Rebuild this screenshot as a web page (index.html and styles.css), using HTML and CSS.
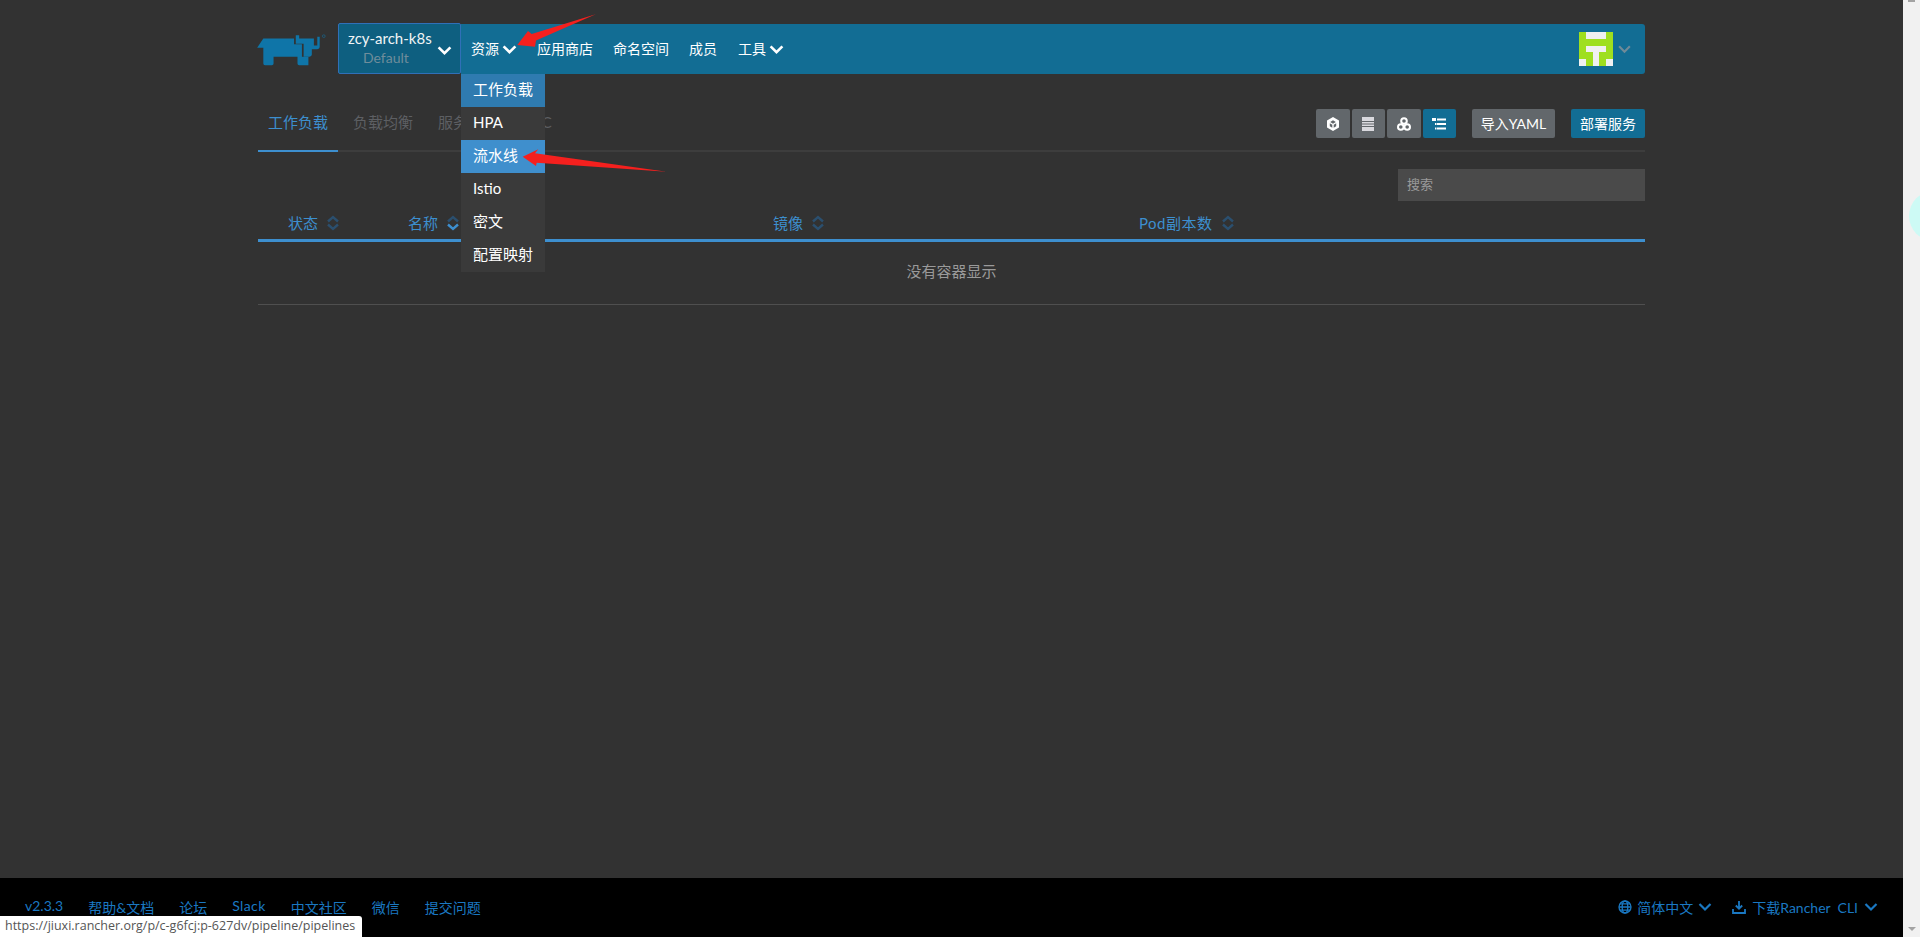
FILE: index.html
```html
<!DOCTYPE html>
<html lang="zh">
<head>
<meta charset="utf-8">
<title>Rancher</title>
<link rel="stylesheet" href="styles.css">
</head>
<body>
<div class="page">
  <main class="main">
    <div class="content">
      <header class="top">
        <div class="logo">
          <svg class="logo-svg" viewBox="0 0 225 120"><path d="M30 25H120V42H143V78H162V103H135Q130 103 130 98V78H60V98Q60 103 55 103H35Q30 103 30 98V52H12Z"/><path d="M125 15H135V25H178V45H188V20H195V50Q195 56 188 56H172V72Q172 78 165 78H148V40H125Z"/><circle class="logo-reg" cx="207" cy="18" r="4"/></svg>
        </div>
        <div class="cluster">
          <div class="cluster-text">
            <div class="cluster-name">zcy-arch-k8s</div>
            <div class="cluster-sub">Default</div>
          </div>
          <svg class="chev chev-cluster" viewBox="0 0 14 10"><path d="M1.500 2l5.500 5.500L12.500 2"/></svg>
        </div>
        <nav class="nav">
          <a class="nav-item">资源<svg class="chev" viewBox="0 0 14 10"><path d="M1.500 2l5.500 5.500L12.500 2"/></svg></a>
          <a class="nav-item">应用商店</a>
          <a class="nav-item">命名空间</a>
          <a class="nav-item nav-members">成员</a>
          <a class="nav-item">工具<svg class="chev" viewBox="0 0 14 10"><path d="M1.500 2l5.500 5.500L12.500 2"/></svg></a>
          <div class="avatar-wrap">
            <svg class="avatar" viewBox="0 0 5 5" shape-rendering="crispEdges">
              <rect width="5" height="5" fill="#9fdf1f"/>
              <g fill="#f0f0f0"><rect x="1" y="0" width="3" height="1"/><rect x="1" y="2" width="3" height="1"/><rect x="2" y="3" width="1" height="2"/><rect x="0" y="4" width="1" height="1"/><rect x="4" y="4" width="1" height="1"/></g>
            </svg>
            <svg class="chev chev-user" viewBox="0 0 14 10"><path d="M2 2l5 5 5-5"/></svg>
          </div>
          <ul class="menu">
            <li class="menu-item menu-current">工作负载</li>
            <li class="menu-item">HPA</li>
            <li class="menu-item menu-hover">流水线</li>
            <li class="menu-item">Istio</li>
            <li class="menu-item">密文</li>
            <li class="menu-item">配置映射</li>
          </ul>
        </nav>
      </header>

      <section class="tabbar">
        <div class="tabs">
          <a class="tab tab-active">工作负载</a>
          <a class="tab">负载均衡</a>
          <a class="tab">服务发现</a>
          <a class="tab">PVC</a>
        </div>
        <div class="actions">
          <div class="icon-group">
            <button class="icon-btn"><svg viewBox="0 0 16 16"><path class="ico-w" d="M8 1L14 4.500V11.500L8 15 2 11.500V4.500Z"/><path class="ico-d" d="M5.200 6L8 7.700 10.800 6 8 4.300ZM4.800 7.300L7.300 8.800V11.800L4.800 10.300ZM11.200 7.300L8.700 8.800V11.800L11.200 10.300Z"/></svg></button>
            <button class="icon-btn"><svg viewBox="0 0 16 16"><path class="ico-f" d="M2 1h12v14H2z"/><path class="ico-l" d="M2 5.500h12M2 8h12M2 10.500h12"/></svg></button>
            <button class="icon-btn"><svg viewBox="0 0 16 16"><g class="ico-s"><circle cx="8" cy="5" r="2.800"/><circle cx="4.800" cy="11" r="2.800"/><circle cx="11.200" cy="11" r="2.800"/></g></svg></button>
            <button class="icon-btn icon-btn-on"><svg viewBox="0 0 16 16"><path class="ico-w" d="M1 2h4v3H1zM6 2.500h9v2H6zM6 7h9v2H6zM6 11.500h9v2H6zM4 7h1.500v2H4zM4 11.500h1.500v2H4z"/></svg></button>
          </div>
          <button class="btn btn-grey">导入YAML</button>
          <button class="btn btn-primary">部署服务</button>
        </div>
      </section>

      <div class="search-row"><div class="search">搜索</div></div>

      <div class="table-head">
        <div class="th th-state">状态<svg class="sort" viewBox="0 0 14 18"><path d="M2 7.500L7 3l5 4.500M2 10.500l5 4.500 5-4.500"/></svg></div>
        <div class="th">名称<svg class="sort" viewBox="0 0 14 18"><path d="M2 7.500L7 3l5 4.500"/><path class="sort-on" d="M2 10.500l5 4.500 5-4.500"/></svg></div>
        <div class="th">镜像<svg class="sort" viewBox="0 0 14 18"><path d="M2 7.500L7 3l5 4.500M2 10.500l5 4.500 5-4.500"/></svg></div>
        <div class="th th-pods">Pod副本数<svg class="sort" viewBox="0 0 14 18"><path d="M2 7.500L7 3l5 4.500M2 10.500l5 4.500 5-4.500"/></svg></div>
      </div>
      <div class="empty">没有容器显示</div>
    </div>

    <footer class="footer">
      <div class="foot-links">
        <a>v2.3.3</a><a>帮助&amp;文档</a><a>论坛</a><a class="foot-slack">Slack</a><a>中文社区</a><a>微信</a><a>提交问题</a>
      </div>
      <div class="foot-right">
        <a class="foot-drop foot-lang">
          <svg class="foot-ico" viewBox="0 0 14 14"><g class="foot-s"><circle cx="7" cy="7" r="6"/><ellipse cx="7" cy="7" rx="2.800" ry="6"/><path d="M1 7h12M2 3.800h10M2 10.200h10"/></g></svg>
          简体中文
          <svg class="foot-chev" viewBox="0 0 14 10"><path d="M1.500 2l5.500 5.500L12.500 2"/></svg>
        </a>
        <a class="foot-drop">
          <svg class="foot-ico" viewBox="0 0 14 14"><path class="foot-w" d="M7 1v7.500M3.800 5.500L7 8.700l3.200-3.200M1 9v4h12V9"/></svg>
          下载Rancher&nbsp;&nbsp;CLI
          <svg class="foot-chev" viewBox="0 0 14 10"><path d="M1.500 2l5.500 5.500L12.500 2"/></svg>
        </a>
      </div>
    </footer>
    <div class="status-tip">https://jiuxi.rancher.org/p/c-g6fcj:p-627dv/pipeline/pipelines</div>
  </main>
  <aside class="scrollbar">
    <span class="sb-up"></span>
    <span class="sb-down"></span>
    <span class="bubble"></span>
  </aside>
</div>
<svg class="arrows" viewBox="0 0 1920 937">
  <path d="M595.700 14.300L531.700 34 528 31 517.300 45 535 46.700 536 40.500Z"/>
  <path d="M522.700 156.700L538.300 149.300 535 153.300 666.700 171.700 536.700 162.700 536 166Z"/>
</svg>
</body>
</html>
```

FILE: styles.css
```css
* { box-sizing: border-box; }
html, body { margin: 0; height: 100%; overflow: hidden; }
body {
  background: #323232;
  font-family: Lato, "Noto Sans CJK SC", sans-serif;
  font-size: 14px;
  color: #fff;
}
a { text-decoration: none; }
ul { margin: 0; padding: 0; list-style: none; }
.page { display: flex; height: 937px; }
.main { flex: 1; display: flex; flex-direction: column; position: relative; min-width: 0; }
.content { flex: 1; padding: 23px 258px 0 258px; }

.chev { width: 15px; height: 11px; fill: none; stroke: #fff; stroke-width: 2.400; }

.top { display: flex; height: 51px; }
.logo { width: 80px; flex: none; padding-top: 7px; }
.logo-svg { display: block; width: 77px; height: 41px; margin-left: -5px; fill: #0f75a8; }
.logo-reg { fill: none; stroke: #0f75a8; stroke-width: 1.500; }
.cluster {
  width: 123px; flex: none;
  display: flex; align-items: center;
  padding-left: 9px;
  background: #0e5f80;
  border: 1px solid #3070b8;
  border-radius: 2px;
  position: relative;
}
.cluster::after {
  content: ""; position: absolute; right: -6px; top: 21px;
  border-left: 5px solid #0e5f80;
  border-top: 5px solid transparent;
  border-bottom: 5px solid transparent;
}
.cluster-text { flex: 1; line-height: 20px; padding-bottom: 1px; }
.cluster-name { color: #f0f4f6; font-size: 15px; white-space: nowrap; }
.cluster-sub { color: #6f8d9b; padding-left: 15px; }
.chev-cluster { margin: 3px 8px 0 0; flex: none; }

.nav {
  flex: 1; margin-top: 1px;
  display: flex; align-items: center;
  background: #126d94;
  border-radius: 0 3px 3px 0;
  padding-left: 10px;
  position: relative;
}
.nav-item { color: #fff; display: flex; align-items: center; gap: 3px; margin-right: 20px; padding-bottom: 3px; }
.nav-item .chev { margin-top: 3px; }
.nav-members { margin-right: 21px; }
.avatar-wrap { margin-left: auto; display: flex; align-items: center; gap: 4px; padding-right: 13px; }
.avatar { width: 34px; height: 34px; display: block; }
.chev-user { stroke: #6f8a98; stroke-width: 2; }
.menu {
  position: absolute; left: 0; top: 100%; width: 84px; z-index: 3;
  background: #3a3a3a;
}
.menu-item { height: 33px; line-height: 31px; padding-left: 12px; font-size: 15px; color: #fff; white-space: nowrap; }
.menu-current { background: #2f7bb0; }
.menu-hover { background: #3f8fcd; }

.tabbar {
  margin-top: 24px; height: 54px;
  display: flex; justify-content: space-between;
  border-bottom: 2px solid #3d3d3d;
}
.tabs { display: flex; gap: 5px; }
.tab {
  height: 54px; padding: 0 10px; line-height: 49px;
  font-size: 15px; color: #5d5f63;
}
.tab-active { color: #3d8fcf; border-bottom: 2px solid #3d8fcf; width: 80px; }
.actions { display: flex; height: 29px; margin-top: 11px; }
.icon-group { display: flex; gap: 2px; margin-right: 16px; }
.icon-btn {
  width: 33.500px; height: 29px; padding: 0; border: 0; border-radius: 2px;
  background: #62676b; display: flex; align-items: center; justify-content: center;
}
.icon-btn svg { width: 16px; height: 16px; display: block; }
.icon-btn-on { background: #126d94; }
.ico-s { fill: none; stroke: #fff; stroke-width: 2; }
.ico-f { fill: #d9d9de; }
.ico-l { fill: none; stroke: #62676b; stroke-width: 1; }
.ico-w { fill: #fff; }
.ico-d { fill: #62676b; }
.btn {
  height: 29px; padding: 0 0 2px; border: 0; border-radius: 2px;
  font: inherit; font-size: 14px; color: #fff;
}
.btn-grey { width: 83px; background: #62676b; margin-right: 16px; }
.btn-primary { width: 74px; background: #126d94; }

.search-row { display: flex; justify-content: flex-end; margin-top: 17px; }
.search {
  width: 247px; height: 32px; line-height: 30px; padding-left: 9px;
  background: #4a4a4a; color: #9a9a9a; font-size: 13px;
}

.table-head {
  display: grid; grid-template-columns: 140px 365px 366px 1fr;
  height: 41px; padding-top: 12px;
  border-bottom: 3px solid #3d8fcf;
}
.th { color: #3d8fcf; font-size: 15px; line-height: 20px; padding-left: 10px; display: flex; align-items: center; gap: 8px; height: 20px; }
.th-state { padding-left: 30px; }
.th-pods { letter-spacing: .5px; }
.sort { width: 14px; height: 18px; fill: none; stroke: #2b4f6e; stroke-width: 2.400; }
.sort-on { stroke: #3d8fcf; }
.empty {
  height: 63px; line-height: 58px; text-align: center;
  color: #9a9a9a; font-size: 15px;
  border-bottom: 1px solid #4f4f4f;
}

.footer {
  flex: none; height: 59px; background: #000;
  display: flex; justify-content: space-between; align-items: center;
  padding: 0 25px 1px; color: #1a78c2; font-size: 14px;
}
.foot-links { display: flex; gap: 25px; }
.foot-links a, .foot-drop { color: #1a78c2; white-space: nowrap; }
.foot-slack { letter-spacing: .4px; }
.foot-right { display: flex; gap: 20px; }
.foot-drop { display: flex; align-items: center; gap: 6px; }
.foot-lang { gap: 5px; }
.foot-ico { width: 14px; height: 14px; }
.foot-s, .foot-w { fill: none; stroke: #1a78c2; stroke-width: 1.300; }
.foot-w { stroke-width: 1.800; }
.foot-chev { width: 14px; height: 10px; fill: none; stroke: #1a78c2; stroke-width: 2.200; }
.status-tip {
  position: absolute; left: 0; bottom: 0;
  width: 362px; height: 21px; line-height: 20px; padding-left: 5px;
  background: #fff; color: #555; font-size: 12.500px;
  font-family: "Open Sans", sans-serif; white-space: nowrap;
  border-radius: 0 3px 0 0;
}

.scrollbar {
  width: 17px; flex: none; background: #f1f1f1;
  display: flex; flex-direction: column; justify-content: space-between; align-items: center;
  position: relative; overflow: hidden; padding: 0 0 6px;
}
.sb-up { width: 7px; height: 2px; background: #a3a3a3; }
.sb-down {
  border-top: 4px solid #a3a3a3;
  border-left: 4px solid transparent; border-right: 4px solid transparent;
}
.bubble {
  position: absolute; left: 6px; top: 191px;
  width: 50px; height: 50px; border-radius: 50%;
  background: #cdfaf5;
}

.arrows { position: fixed; left: 0; top: 0; width: 1920px; height: 937px; z-index: 5; pointer-events: none; fill: #f5201e; }
```
